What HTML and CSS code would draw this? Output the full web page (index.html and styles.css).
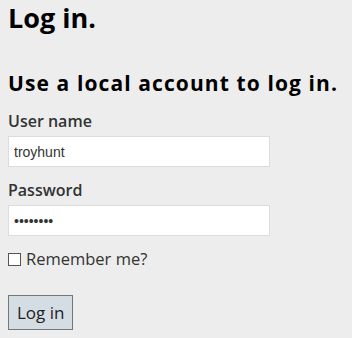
FILE: index.html
```html
<!DOCTYPE html>
<html lang="en">
<head>
    <meta charset="UTF-8">
    <meta name="viewport" content="width=device-width, initial-scale=1.0">
    <title>Log in</title>
    <link rel="stylesheet" href="styles.css">
</head>
<body>

    <h2 class="page-title">Log in.</h2>

    <section class="login-box">
        <h4 class="login-subtitle">Use a local account to log in.</h4>

        <form class="login-form">
            <div class="form-group">
                <label for="username">User name</label>
                <input type="text" id="username" class="form-control" value="troyhunt">
            </div>

            <div class="form-group">
                <label for="password">Password</label>
                <input type="password" id="password" class="form-control" value="password">
            </div>

            <div class="remember">
                <input type="checkbox" id="remember">
                <label for="remember">Remember me?</label>
            </div>

            <button type="submit" class="btn-login">Log in</button>
        </form>
    </section>

</body>
</html>
```

FILE: styles.css
```css
body {
    font-family: "Open Sans", "Noto Sans", sans-serif;
    background-color: #ededed;
    color: #333;
    margin: 0;
    padding: 0 8px;
}

.page-title {
    font-size: 27px;
    font-weight: bold;
    color: #000;
    margin: 1px 0 0 0;
    line-height: 34px;
}

.login-subtitle {
    font-size: 21px;
    font-weight: bold;
    letter-spacing: 1.1px;
    color: #000;
    margin: 33px 0 0 0;
    line-height: 30px;
    white-space: nowrap;
}

.login-form {
    display: flex;
    flex-direction: column;
    align-items: flex-start;
}

.form-group {
    display: flex;
    flex-direction: column;
    margin-top: 11px;
}

.form-group label {
    font-size: 16px;
    font-weight: 600;
    line-height: 24px;
    margin-bottom: 3px;
}

.form-control {
    width: 262px;
    height: 31px;
    box-sizing: border-box;
    border: 1px solid #dcdcdc;
    background-color: #fff;
    padding: 0 5px;
    font-family: "Liberation Sans", sans-serif;
    font-size: 14px;
    color: #333;
    margin: 0;
    outline: none;
}

.remember {
    display: flex;
    align-items: center;
    margin-top: 13px;
    height: 20px;
}

.remember input {
    appearance: none;
    box-sizing: border-box;
    width: 13px;
    height: 13px;
    margin: 0 5px 0 0;
    background-color: #fff;
    border: 1px solid #555;
}

.remember label {
    font-size: 16.5px;
    line-height: 20px;
}

.btn-login {
    margin-top: 26px;
    height: 35px;
    padding: 0 8px;
    background-color: #d4dde4;
    border: 1px solid #777;
    font-family: "Open Sans", "Noto Sans", sans-serif;
    font-size: 17px;
    color: #222;
}
```
